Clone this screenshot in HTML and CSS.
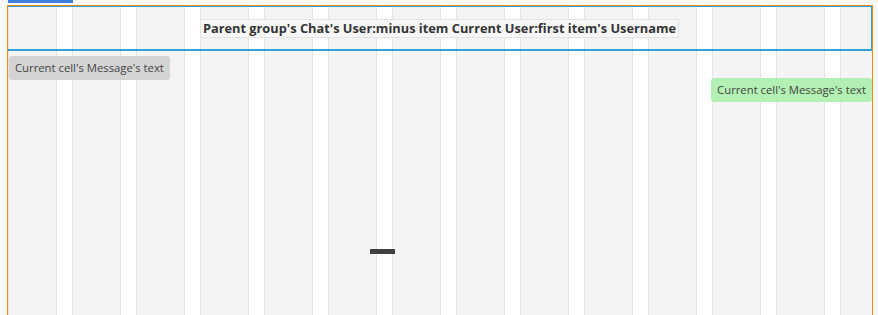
FILE: index.html
```html
<!DOCTYPE html>
<html lang="en">
<head>
    <meta charset="UTF-8">
    <meta name="viewport" content="width=device-width, initial-scale=1.0">
    <title>Chat</title>
    <link rel="stylesheet" href="styles.css">
</head>
<body>
    <div class="tab"></div>
    <main class="chat">
        <header class="chat-header">
            <h3 class="chat-title">Parent group's Chat's User:minus item Current User:first item's Username</h3>
        </header>
        <section class="messages">
            <p class="message message-in">Current cell's Message's text</p>
            <p class="message message-out">Current cell's Message's text</p>
            <span class="loader"></span>
        </section>
    </main>
</body>
</html>
```

FILE: styles.css
```css
:root{
    --open-sans: 'Open Sans', 'Noto Sans', sans-serif;
    --orange: #ec8a12;
    --blue: #2da3d8;
    --tab-blue: #3d7fdc;
    --col-grey: #f4f4f4;
    --col-line: #e4e4e4;
    --bubble-grey: #d4d4d4;
    --bubble-green: #b3f0b3;
    --text: #333;
}
html{
    box-sizing: border-box;
}
*,*::before,*::after{
    box-sizing: inherit;
    margin: 0;
    padding: 0;
}
body{
    font-family: var(--open-sans);
    background-color: #f9f9f9;
    height: 315px;
    overflow: hidden;
}
.tab{
    width: 65px;
    height: 3px;
    margin-left: 8px;
    background-color: var(--tab-blue);
}
.chat{
    margin: 2px 0 0 7px;
    width: 866px;
    height: 320px;
    border: 1px solid var(--orange);
    border-bottom: none;
    background-color: #fff;
    background-image: repeating-linear-gradient(to right,
        var(--col-line) 0 1px,
        var(--col-grey) 1px 48px,
        var(--col-line) 48px 49px,
        #fff 49px 64px);
}
.chat-header{
    height: 45px;
    display: flex;
    align-items: center;
    justify-content: center;
    border-top: 1px solid var(--blue);
    border-right: 1px solid var(--blue);
    border-bottom: 2px solid var(--blue);
}
.chat-title{
    font-size: 12.8px;
    font-weight: 700;
    color: var(--text);
    line-height: 17px;
    padding: 0 2px;
    border: 1px solid var(--col-line);
    background-color: #f7f7f7;
}
.messages{
    position: relative;
    display: flex;
    flex-direction: column;
    padding: 5px 0 0 1px;
}
.message{
    font-size: 11.3px;
    line-height: 24px;
    height: 24px;
    padding: 0 6px;
    color: #444;
    border-radius: 3px;
    white-space: nowrap;
}
.message-in{
    align-self: flex-start;
    background-color: var(--bubble-grey);
}
.message-out{
    align-self: flex-end;
    margin-top: -2px;
    background-color: var(--bubble-green);
}
.loader{
    position: absolute;
    left: 362px;
    top: 198px;
    width: 25px;
    height: 5px;
    background-color: #404040;
}
```
